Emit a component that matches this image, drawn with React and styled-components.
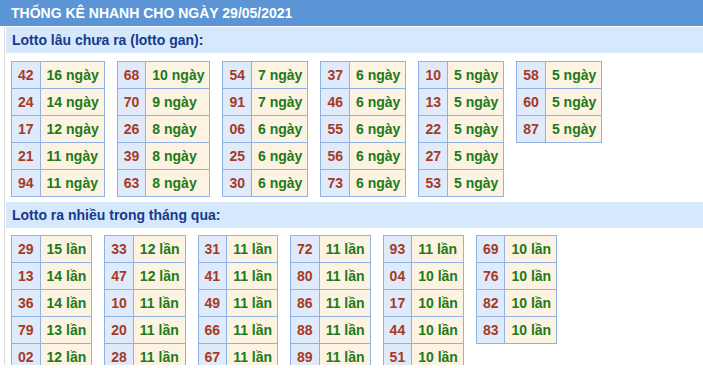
import React from 'react'
import styled, { createGlobalStyle } from 'styled-components'

const GlobalStyle = createGlobalStyle`
  html, body {
    margin: 0;
    padding: 0;
    background: #ffffff;
  }
  body {
    font-family: "Liberation Sans", Arial, sans-serif;
  }
`

const Page = styled.div`
  width: 703px;
  height: 365px;
  overflow: hidden;
  background: #ffffff;
`

const Header = styled.div`
  height: 26px;
  line-height: 26px;
  background: #5b95d6;
  color: #ffffff;
  font-size: 14px;
  font-weight: bold;
  padding-left: 11px;
  margin-bottom: 1px;
`

const Body = styled.div`
  margin-left: 4px;
  border-left: 1px solid #dcdcdc;
  height: 338px;
`

const SectionTitle = styled.div`
  height: 26px;
  line-height: 26px;
  margin-left: 1px;
  background: #d5e8fc;
  color: #163a8e;
  font-size: 14px;
  font-weight: bold;
  padding-left: 6px;
`

const TableRow = styled.div`
  display: flex;
  align-items: flex-start;
  gap: 12px;
  padding: ${({ $top }) => $top}px 0 ${({ $bottom }) => $bottom}px 6px;
`

const StatTable = styled.table`
  border-collapse: collapse;
  font-size: 14px;
  font-weight: bold;
`

const NumCell = styled.td`
  border: 1px solid #8fb1e3;
  background: #dfeafb;
  color: #a63a25;
  height: 27px;
  padding: 0 6px;
  box-sizing: border-box;
  text-align: center;
`

const ValueCell = styled.td`
  border: 1px solid #8fb1e3;
  background: #fdf3e2;
  color: #217a17;
  height: 27px;
  padding: 0 5px 0 6px;
  box-sizing: border-box;
  white-space: nowrap;
`

const ganData = [
  [['42', 16], ['24', 14], ['17', 12], ['21', 11], ['94', 11]],
  [['68', 10], ['70', 9], ['26', 8], ['39', 8], ['63', 8]],
  [['54', 7], ['91', 7], ['06', 6], ['25', 6], ['30', 6]],
  [['37', 6], ['46', 6], ['55', 6], ['56', 6], ['73', 6]],
  [['10', 5], ['13', 5], ['22', 5], ['27', 5], ['53', 5]],
  [['58', 5], ['60', 5], ['87', 5]],
]

const frequentData = [
  [['29', 15], ['13', 14], ['36', 14], ['79', 13], ['02', 12]],
  [['33', 12], ['47', 12], ['10', 11], ['20', 11], ['28', 11]],
  [['31', 11], ['41', 11], ['49', 11], ['66', 11], ['67', 11]],
  [['72', 11], ['80', 11], ['86', 11], ['88', 11], ['89', 11]],
  [['93', 11], ['04', 10], ['17', 10], ['44', 10], ['51', 10]],
  [['69', 10], ['76', 10], ['82', 10], ['83', 10]],
]

function Group({ rows, unit }) {
  return (
    <StatTable>
      <tbody>
        {rows.map(([num, count]) => (
          <tr key={num}>
            <NumCell>{num}</NumCell>
            <ValueCell>{count} {unit}</ValueCell>
          </tr>
        ))}
      </tbody>
    </StatTable>
  )
}

export default function App() {
  return (
    <Page>
      <GlobalStyle />
      <Header>THỐNG KÊ NHANH CHO NGÀY 29/05/2021</Header>
      <Body>
        <SectionTitle>Lotto lâu chưa ra (lotto gan):</SectionTitle>
        <TableRow $top={8} $bottom={5}>
          {ganData.map((rows, i) => (
            <Group key={i} rows={rows} unit="ngày" />
          ))}
        </TableRow>
        <SectionTitle>Lotto ra nhiều trong tháng qua:</SectionTitle>
        <TableRow $top={7} $bottom={0}>
          {frequentData.map((rows, i) => (
            <Group key={i} rows={rows} unit="lần" />
          ))}
        </TableRow>
      </Body>
    </Page>
  )
}
